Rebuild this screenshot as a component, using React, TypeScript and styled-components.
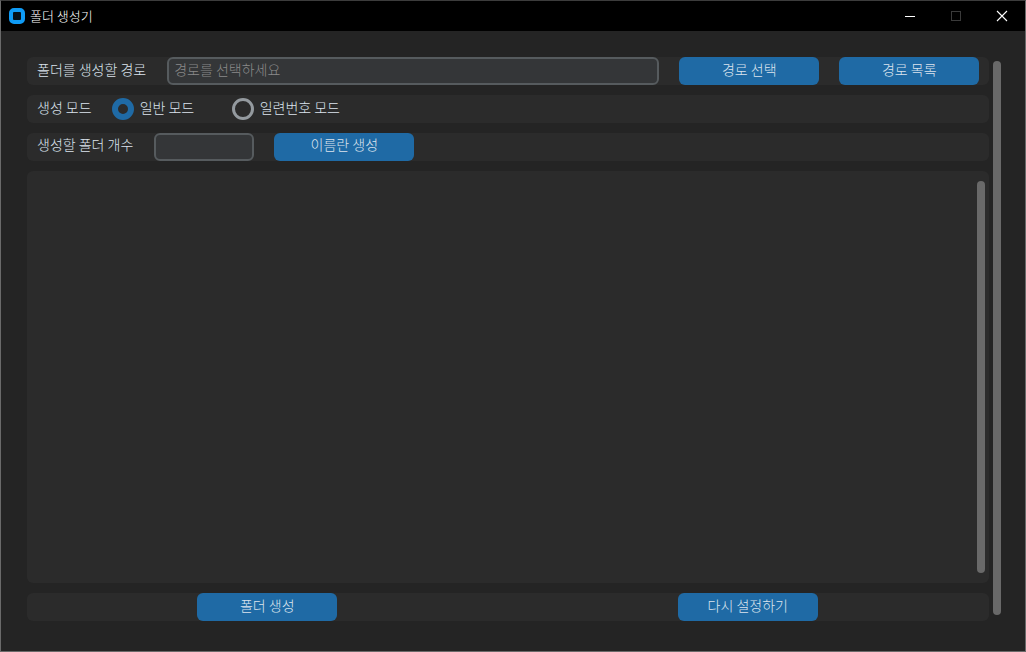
import React from 'react'
import styled, { createGlobalStyle } from 'styled-components'

const GlobalStyle = createGlobalStyle`
  html, body {
    margin: 0;
    padding: 0;
    background: #242424;
  }
  * {
    box-sizing: border-box;
  }
`

const App = () => {
  return (
    <Window>
      <GlobalStyle />
      <TitleBar>
        <AppIcon />
        <TitleText>폴더 생성기</TitleText>
        <WinControls>
          <WinButton>
            <svg width="14" height="14" viewBox="0 0 14 14">
              <path d="M2 7.5H12" stroke="#fff" strokeWidth="1" />
            </svg>
          </WinButton>
          <WinButton>
            <svg width="14" height="14" viewBox="0 0 14 14">
              <rect x="2.5" y="2.5" width="9" height="9" fill="none" stroke="#3a3a3a" strokeWidth="1" />
            </svg>
          </WinButton>
          <WinButton>
            <svg width="14" height="14" viewBox="0 0 14 14">
              <path d="M2 2L12 12M12 2L2 12" stroke="#fff" strokeWidth="1.1" />
            </svg>
          </WinButton>
        </WinControls>
      </TitleBar>
      <Body>
        <Main>
          <Row>
            <Label>폴더를 생성할 경로</Label>
            <PathInput placeholder="경로를 선택하세요" readOnly />
            <BlueButton $left={20}>경로 선택</BlueButton>
            <BlueButton $left={20}>경로 목록</BlueButton>
          </Row>
          <Row>
            <Label>생성 모드</Label>
            <RadioItem $left={20} $width={120}>
              <Radio $checked />
              <RadioText>일반 모드</RadioText>
            </RadioItem>
            <RadioItem>
              <Radio />
              <RadioText>일련번호 모드</RadioText>
            </RadioItem>
          </Row>
          <Row>
            <Label $lift={6}>생성할 폴더 개수</Label>
            <CountInput />
            <BlueButton $left={20} $lift={6}>이름란 생성</BlueButton>
          </Row>
          <ScrollPanel>
            <InnerThumb />
          </ScrollPanel>
          <BottomRow>
            <BlueButton>폴더 생성</BlueButton>
            <BlueButton>다시 설정하기</BlueButton>
          </BottomRow>
        </Main>
        <OuterThumb />
      </Body>
    </Window>
  )
}

export default App

const Window = styled.div`
  width: 1026px;
  height: 652px;
  display: flex;
  flex-direction: column;
  background: #242424;
  border: 1px solid #6a6a6a;
  border-top-color: #3c3c3c;
  overflow: hidden;
  font-family: "Noto Sans CJK KR", "Noto Sans", sans-serif;
  font-weight: 300;
`
const TitleBar = styled.div`
  height: 30px;
  flex: none;
  display: flex;
  align-items: center;
  background: #000;
  padding-left: 8px;
`
const AppIcon = styled.div`
  width: 16px;
  height: 16px;
  border: 4px solid #0f9bf5;
  border-radius: 5px;
  background: #061018;
`
const TitleText = styled.span`
  margin-left: 5px;
  padding-bottom: 2px;
  font-size: 13px;
  line-height: 1;
  color: #fff;
`
const WinControls = styled.div`
  margin-left: auto;
  display: flex;
`
const WinButton = styled.div`
  width: 46px;
  height: 30px;
  display: flex;
  align-items: center;
  justify-content: center;
`
const Body = styled.div`
  flex: 1;
  display: flex;
  align-items: flex-start;
  padding: 26px 0 0 26px;
`
const Main = styled.div`
  width: 962px;
  display: flex;
  flex-direction: column;
  gap: 10px;
`
const Row = styled.div`
  height: 28px;
  display: flex;
  align-items: center;
  padding-left: 10px;
  background: #2b2b2b;
  border-radius: 6px;
`
const Label = styled.span<{ $lift?: number }>`
  padding-bottom: ${p => p.$lift ?? 4}px;
  font-size: 14px;
  line-height: 1;
  color: #dce4ee;
  white-space: nowrap;
`
const PathInput = styled.input`
  width: 492px;
  height: 28px;
  margin-left: 21px;
  padding: 0 5px 4px;
  background: #343638;
  border: 2px solid #565b5e;
  border-radius: 6px;
  font-family: inherit;
  font-weight: inherit;
  font-size: 14px;
  color: #dce4ee;
  outline: none;
  &::placeholder {
    color: #8a8a8a;
    opacity: 1;
  }
`
const CountInput = styled.input`
  width: 100px;
  height: 28px;
  margin-left: 21px;
  background: #343638;
  border: 2px solid #565b5e;
  border-radius: 6px;
  outline: none;
`
const BlueButton = styled.button<{ $left?: number; $lift?: number }>`
  width: 140px;
  height: 28px;
  flex: none;
  margin-left: ${p => p.$left ?? 0}px;
  padding: 0 0 ${p => p.$lift ?? 4}px;
  background: #1f6aa5;
  border: none;
  border-radius: 6px;
  font-family: inherit;
  font-weight: inherit;
  font-size: 14px;
  line-height: 1;
  color: #dce4ee;
`
const RadioItem = styled.div<{ $left?: number; $width?: number }>`
  display: flex;
  align-items: center;
  gap: 6px;
  margin-left: ${p => p.$left ?? 0}px;
  width: ${p => (p.$width ? `${p.$width}px` : 'auto')};
`
const Radio = styled.div<{ $checked?: boolean }>`
  width: 22px;
  height: 22px;
  flex: none;
  border-radius: 50%;
  border: ${p => (p.$checked ? '6px solid #1f6aa5' : '3px solid #949a9f')};
`
const RadioText = styled.span`
  padding-bottom: 4px;
  font-size: 14px;
  line-height: 1;
  color: #dce4ee;
  white-space: nowrap;
`
const ScrollPanel = styled.div`
  height: 412px;
  display: flex;
  justify-content: flex-end;
  padding: 10px 4px 10px 0;
  background: #2b2b2b;
  border-radius: 6px;
`
const InnerThumb = styled.div`
  width: 8px;
  height: 100%;
  background: #696969;
  border-radius: 4px;
`
const BottomRow = styled.div`
  height: 28px;
  display: grid;
  grid-template-columns: 1fr 1fr;
  justify-items: center;
  padding-right: 1px;
  background: #2b2b2b;
  border-radius: 6px;
`
const OuterThumb = styled.div`
  width: 8px;
  height: 554px;
  margin: 4px 0 0 4px;
  background: #696969;
  border-radius: 4px;
`
